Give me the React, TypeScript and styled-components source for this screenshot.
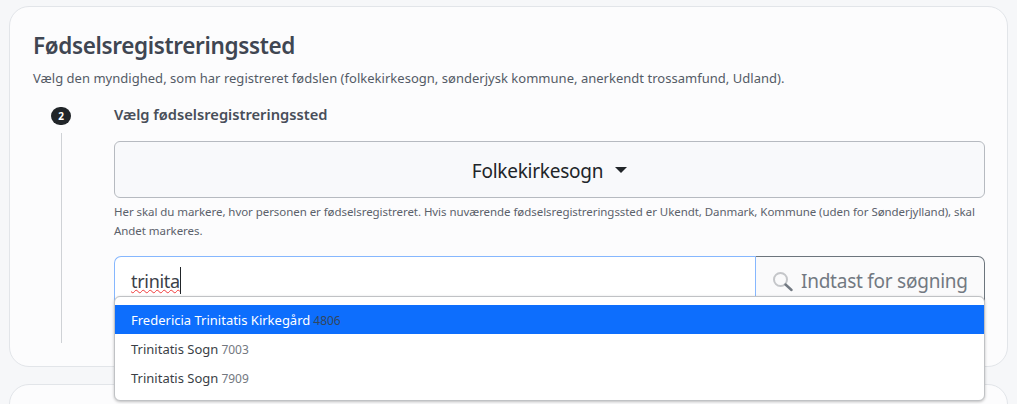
import * as React from "react";
import styled, { createGlobalStyle } from "styled-components";

const Global = createGlobalStyle`
  html, body {
    margin: 0;
    height: 404px;
    overflow: hidden;
    background: #f6f7f9;
    font-family: "Noto Sans", "Open Sans", sans-serif;
    color: #212529;
  }
`;

const Page = styled.div`
  display: flex;
  flex-direction: column;
  gap: 17px;
  height: 404px;
  overflow: hidden;
  padding: 6px 9px 0 9px;
  box-sizing: border-box;
`;

const Card = styled.section`
  box-sizing: border-box;
  flex: none;
  height: 361px;
  padding: 23px 22px 0 23px;
  background: #fcfcfd;
  border: 1px solid #e2e5e9;
  border-radius: 20px;
`;

const NextCard = styled(Card)`
  height: 60px;
  padding: 0;
`;

const Title = styled.h2`
  margin: 0;
  height: 31px;
  font-size: 22.5px;
  line-height: 31px;
  font-weight: 600;
  letter-spacing: -0.35px;
  color: #3f4652;
`;

const Lead = styled.p`
  margin: 8px 0 0;
  height: 18px;
  font-size: 13px;
  line-height: 18px;
  letter-spacing: 0.02px;
  color: #545b66;
`;

const Step = styled.div`
  display: flex;
  margin-top: 17px;
`;

const Rail = styled.div`
  display: flex;
  flex-direction: column;
  align-items: center;
  width: 20px;
  margin-left: 18px;
  margin-right: 43px;
  padding-top: 3px;
`;

const Badge = styled.div`
  width: 20px;
  height: 18px;
  border-radius: 9px;
  background: #212529;
  color: #fff;
  font-size: 10px;
  font-weight: 700;
  line-height: 18px;
  text-align: center;
`;

const RailLine = styled.div`
  width: 1px;
  height: 210px;
  margin-top: 8px;
  background: #cfd2d6;
`;

const Body = styled.div`
  flex: 1;
  min-width: 0;
`;

const StepLabel = styled.div`
  height: 20px;
  font-size: 14.7px;
  line-height: 20px;
  font-weight: 600;
  color: #484e59;
`;

const Select = styled.div`
  box-sizing: border-box;
  display: flex;
  align-items: center;
  justify-content: center;
  gap: 12px;
  height: 57px;
  margin-top: 17px;
  padding-top: 2px;
  background: #f8f9fb;
  border: 1px solid #b6bac0;
  border-radius: 6px;
  font-size: 19px;
  letter-spacing: -0.25px;
  color: #212529;
`;

const Caret = styled.span`
  width: 0;
  height: 0;
  border-left: 6.5px solid transparent;
  border-right: 6.5px solid transparent;
  border-top: 6px solid #212529;
  margin-top: -2px;
`;

const Help = styled.p`
  margin: 4px 0 0;
  font-size: 11.5px;
  line-height: 19px;
  letter-spacing: -0.06px;
  color: #5b616b;
`;

const SearchArea = styled.div`
  position: relative;
  margin-top: 16px;
`;

const InputGroup = styled.div`
  display: flex;
  height: 52px;
`;

const InputBox = styled.div`
  box-sizing: border-box;
  flex: 1;
  padding: 10px 16px 0;
  background: #fff;
  border: 1px solid #86b7fe;
  border-right: none;
  border-radius: 7px 0 0 7px;
  font-size: 19px;
  line-height: 28px;
  color: #3b4048;
`;

const Typed = styled.span`
  display: inline-block;
  height: 27px;
  font-size: 18px;
  letter-spacing: -0.3px;
  border-right: 1px solid #212529;
  text-decoration: underline wavy #f03a3a 1px;
  text-underline-offset: 1px;
`;

const Addon = styled.div`
  box-sizing: border-box;
  display: flex;
  align-items: flex-start;
  gap: 8px;
  width: 230px;
  padding: 10px 0 0 16px;
  background: #fafafb;
  border: 1px solid #6c757d;
  border-left: 1px solid #86b7fe;
  border-radius: 0 7px 7px 0;
  font-size: 19px;
  line-height: 28px;
  letter-spacing: -0.25px;
  color: #727982;
`;

const SearchIcon = styled.svg`
  width: 21px;
  height: 21px;
  margin-top: 4px;
`;

const Menu = styled.ul`
  position: absolute;
  top: 40px;
  left: 0;
  right: 0;
  box-sizing: border-box;
  height: 105px;
  margin: 0;
  padding: 8px 0 0;
  list-style: none;
  background: #fff;
  border: 1px solid #c0c2c5;
  border-radius: 6px;
  box-shadow: 0 1px 3px rgba(0, 0, 0, 0.25);
`;

const Item = styled.li<{ $active?: boolean }>`
  height: 29px;
  padding-left: 16px;
  font-size: 13px;
  line-height: 31px;
  background: ${({ $active }) => ($active ? "#0d6efd" : "transparent")};
  color: ${({ $active }) => ($active ? "#fff" : "#3a3f46")};
`;

const Code = styled.span<{ $active?: boolean }>`
  margin-left: 3px;
  font-size: 12px;
  color: ${({ $active }) => ($active ? "#33475f" : "#73787f")};
`;

const results = [
  { name: "Fredericia Trinitatis Kirkegård", code: "4806", active: true },
  { name: "Trinitatis Sogn", code: "7003", active: false },
  { name: "Trinitatis Sogn", code: "7909", active: false },
];

export default function App() {
  return (
    <>
      <Global />
      <Page>
        <Card>
          <Title>Fødselsregistreringssted</Title>
          <Lead>
            Vælg den myndighed, som har registreret fødslen (folkekirkesogn, sønderjysk kommune,
            anerkendt trossamfund, Udland).
          </Lead>
          <Step>
            <Rail>
              <Badge>2</Badge>
              <RailLine />
            </Rail>
            <Body>
              <StepLabel>Vælg fødselsregistreringssted</StepLabel>
              <Select>
                Folkekirkesogn
                <Caret />
              </Select>
              <Help>
                Her skal du markere, hvor personen er fødselsregistreret. Hvis nuværende
                fødselsregistreringssted er Ukendt, Danmark, Kommune (uden for Sønderjylland), skal
                Andet markeres.
              </Help>
              <SearchArea>
                <InputGroup>
                  <InputBox>
                    <Typed>trinita</Typed>
                  </InputBox>
                  <Addon>
                    <SearchIcon viewBox="0 0 21 21" fill="none">
                      <circle cx="8.5" cy="8.5" r="6.5" stroke="#c4c6c9" strokeWidth="2" />
                      <path d="M13.5 13.5L19.5 19" stroke="#727982" strokeWidth="2.4" strokeLinecap="round" />
                    </SearchIcon>
                    Indtast for søgning
                  </Addon>
                </InputGroup>
                <Menu>
                  {results.map((r) => (
                    <Item key={r.code} $active={r.active}>
                      {r.name}
                      <Code $active={r.active}>{r.code}</Code>
                    </Item>
                  ))}
                </Menu>
              </SearchArea>
            </Body>
          </Step>
        </Card>
        <NextCard />
      </Page>
    </>
  );
}
